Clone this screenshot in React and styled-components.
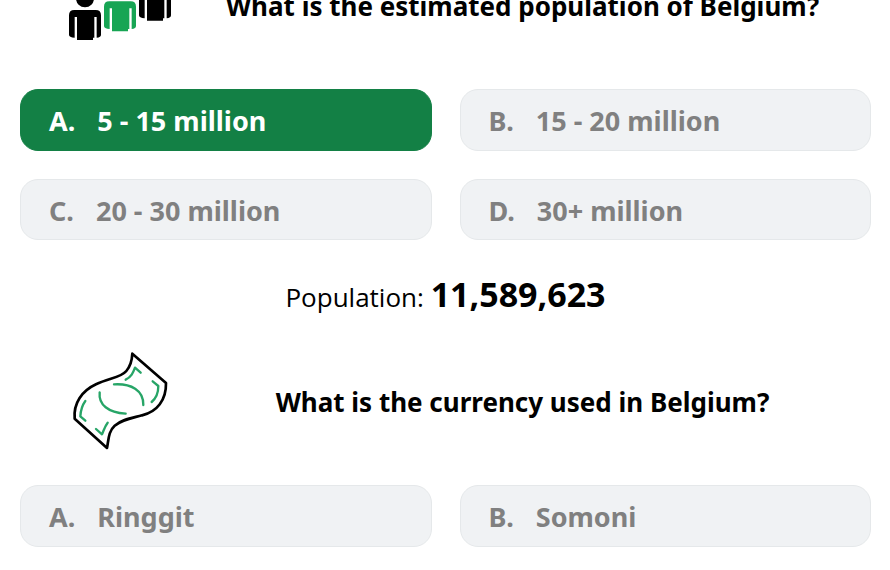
import React from 'react'
import styled, { createGlobalStyle } from 'styled-components'

const GlobalStyle = createGlobalStyle`
  * {
    box-sizing: border-box;
  }

  body {
    margin: 0;
    background: #fff;
    color: #000;
    font-family: 'Segoe UI', 'Noto Sans', 'Open Sans', sans-serif;
    overflow: hidden;
  }
`

const Page = styled.main`
  margin-top: -47px;
  padding: 0 19px 0 20px;
`

const Header = styled.header`
  display: flex;
  align-items: center;
  padding-left: 48px;
  margin-bottom: 32px;
`

const Icon = styled.svg`
  flex: none;
  width: 104px;
  height: 104px;
`

const Title = styled.h2`
  flex: 1;
  margin: 0;
  padding: 2px 0 0 2px;
  font-size: 26px;
  font-weight: 700;
  line-height: 36px;
  text-align: center;
`

const Options = styled.div`
  display: grid;
  grid-template-columns: 1fr 1fr;
  gap: 28px;
`

const Option = styled.button`
  display: flex;
  align-items: center;
  gap: 22px;
  height: ${props => (props.$short ? 61 : 62)}px;
  padding: 2px 28px 0;
  border: 1px solid ${props => (props.$correct ? '#138045' : '#e5e8ea')};
  border-radius: 18px;
  background: ${props => (props.$correct ? '#138045' : '#f0f2f4')};
  color: ${props => (props.$correct ? '#fff' : '#808080')};
  font-family: inherit;
  font-size: 27px;
  font-weight: 700;
  line-height: 36px;
  text-align: left;
  cursor: pointer;
`

const Answer = styled.p`
  margin: 33px 0 31px;
  font-family: 'Segoe UI', 'Open Sans', 'Noto Sans', sans-serif;
  font-size: 26px;
  font-weight: 400;
  line-height: 42px;
  text-align: center;

  strong {
    font-size: 34px;
    font-weight: 700;
  }
`

const Person = ({ x = 0, y = 0, color = '#000' }) => (
  <g transform={`translate(${x} ${y})`} fill={color}>
    <circle cx="105" cy="-5" r="27" />
    <path d="M73 30H137Q153 30 153 46V104Q153 112 140 113V51H133V113H129V120H81V51H74V113Q57 112 57 104V46Q57 30 73 30Z" />
  </g>
)

const PeopleIcon = () => (
  <Icon viewBox="54 -141 312 312" aria-hidden="true">
    <Person />
    <Person x={105} y={-26} color="#17a554" />
    <Person x={210} y={-58} />
  </Icon>
)

const MoneyIcon = () => (
  <Icon
    viewBox="24 27 312 312"
    fill="none"
    strokeWidth="8"
    strokeLinecap="round"
    strokeLinejoin="round"
    aria-hidden="true"
  >
    <path
      stroke="#000"
      d="M217 41L318 129C319 180 291 216 246 226C212 235 187 238 164 257C145 274 146 299 141 324L44 236C40 190 65 153 108 133C147 114 183 113 199 93C212 78 216 61 217 41Z"
    />
    <g stroke="#27a567" strokeWidth="7">
      <path d="M162 133C213 130 251 150 250 195" />
      <path d="M119 157C115 194 145 218 197 221" />
      <path d="M197 119C214 111 219 99 225 83L242 98" />
      <path d="M278 124L295 138C295 157 289 174 275 186" />
      <path d="M76 183C65 198 62 212 61 229L76 242" />
      <path d="M108 267L126 283C132 269 135 258 143 248" />
    </g>
  </Icon>
)

const questions = [
  {
    icon: PeopleIcon,
    title: 'What is the estimated population of Belgium?',
    options: ['5 - 15 million', '15 - 20 million', '20 - 30 million', '30+ million'],
    correct: 0,
    label: 'Population:',
    answer: '11,589,623'
  },
  {
    icon: MoneyIcon,
    title: 'What is the currency used in Belgium?',
    options: ['Ringgit', 'Somoni']
  }
]

const Question = ({ icon: QuestionIcon, title, options, correct, label, answer }) => (
  <section>
    <Header>
      <QuestionIcon />
      <Title>{title}</Title>
    </Header>

    <Options>
      {options.map((option, i) => (
        <Option key={option} type="button" $correct={i === correct} $short={i > 1}>
          <span>{'ABCD'[i]}.</span>
          <span>{option}</span>
        </Option>
      ))}
    </Options>

    {answer && (
      <Answer>
        {label} <strong>{answer}</strong>
      </Answer>
    )}
  </section>
)

const App = () => (
  <Page>
    <GlobalStyle />
    {questions.map(question => (
      <Question key={question.title} {...question} />
    ))}
  </Page>
)

export default App
